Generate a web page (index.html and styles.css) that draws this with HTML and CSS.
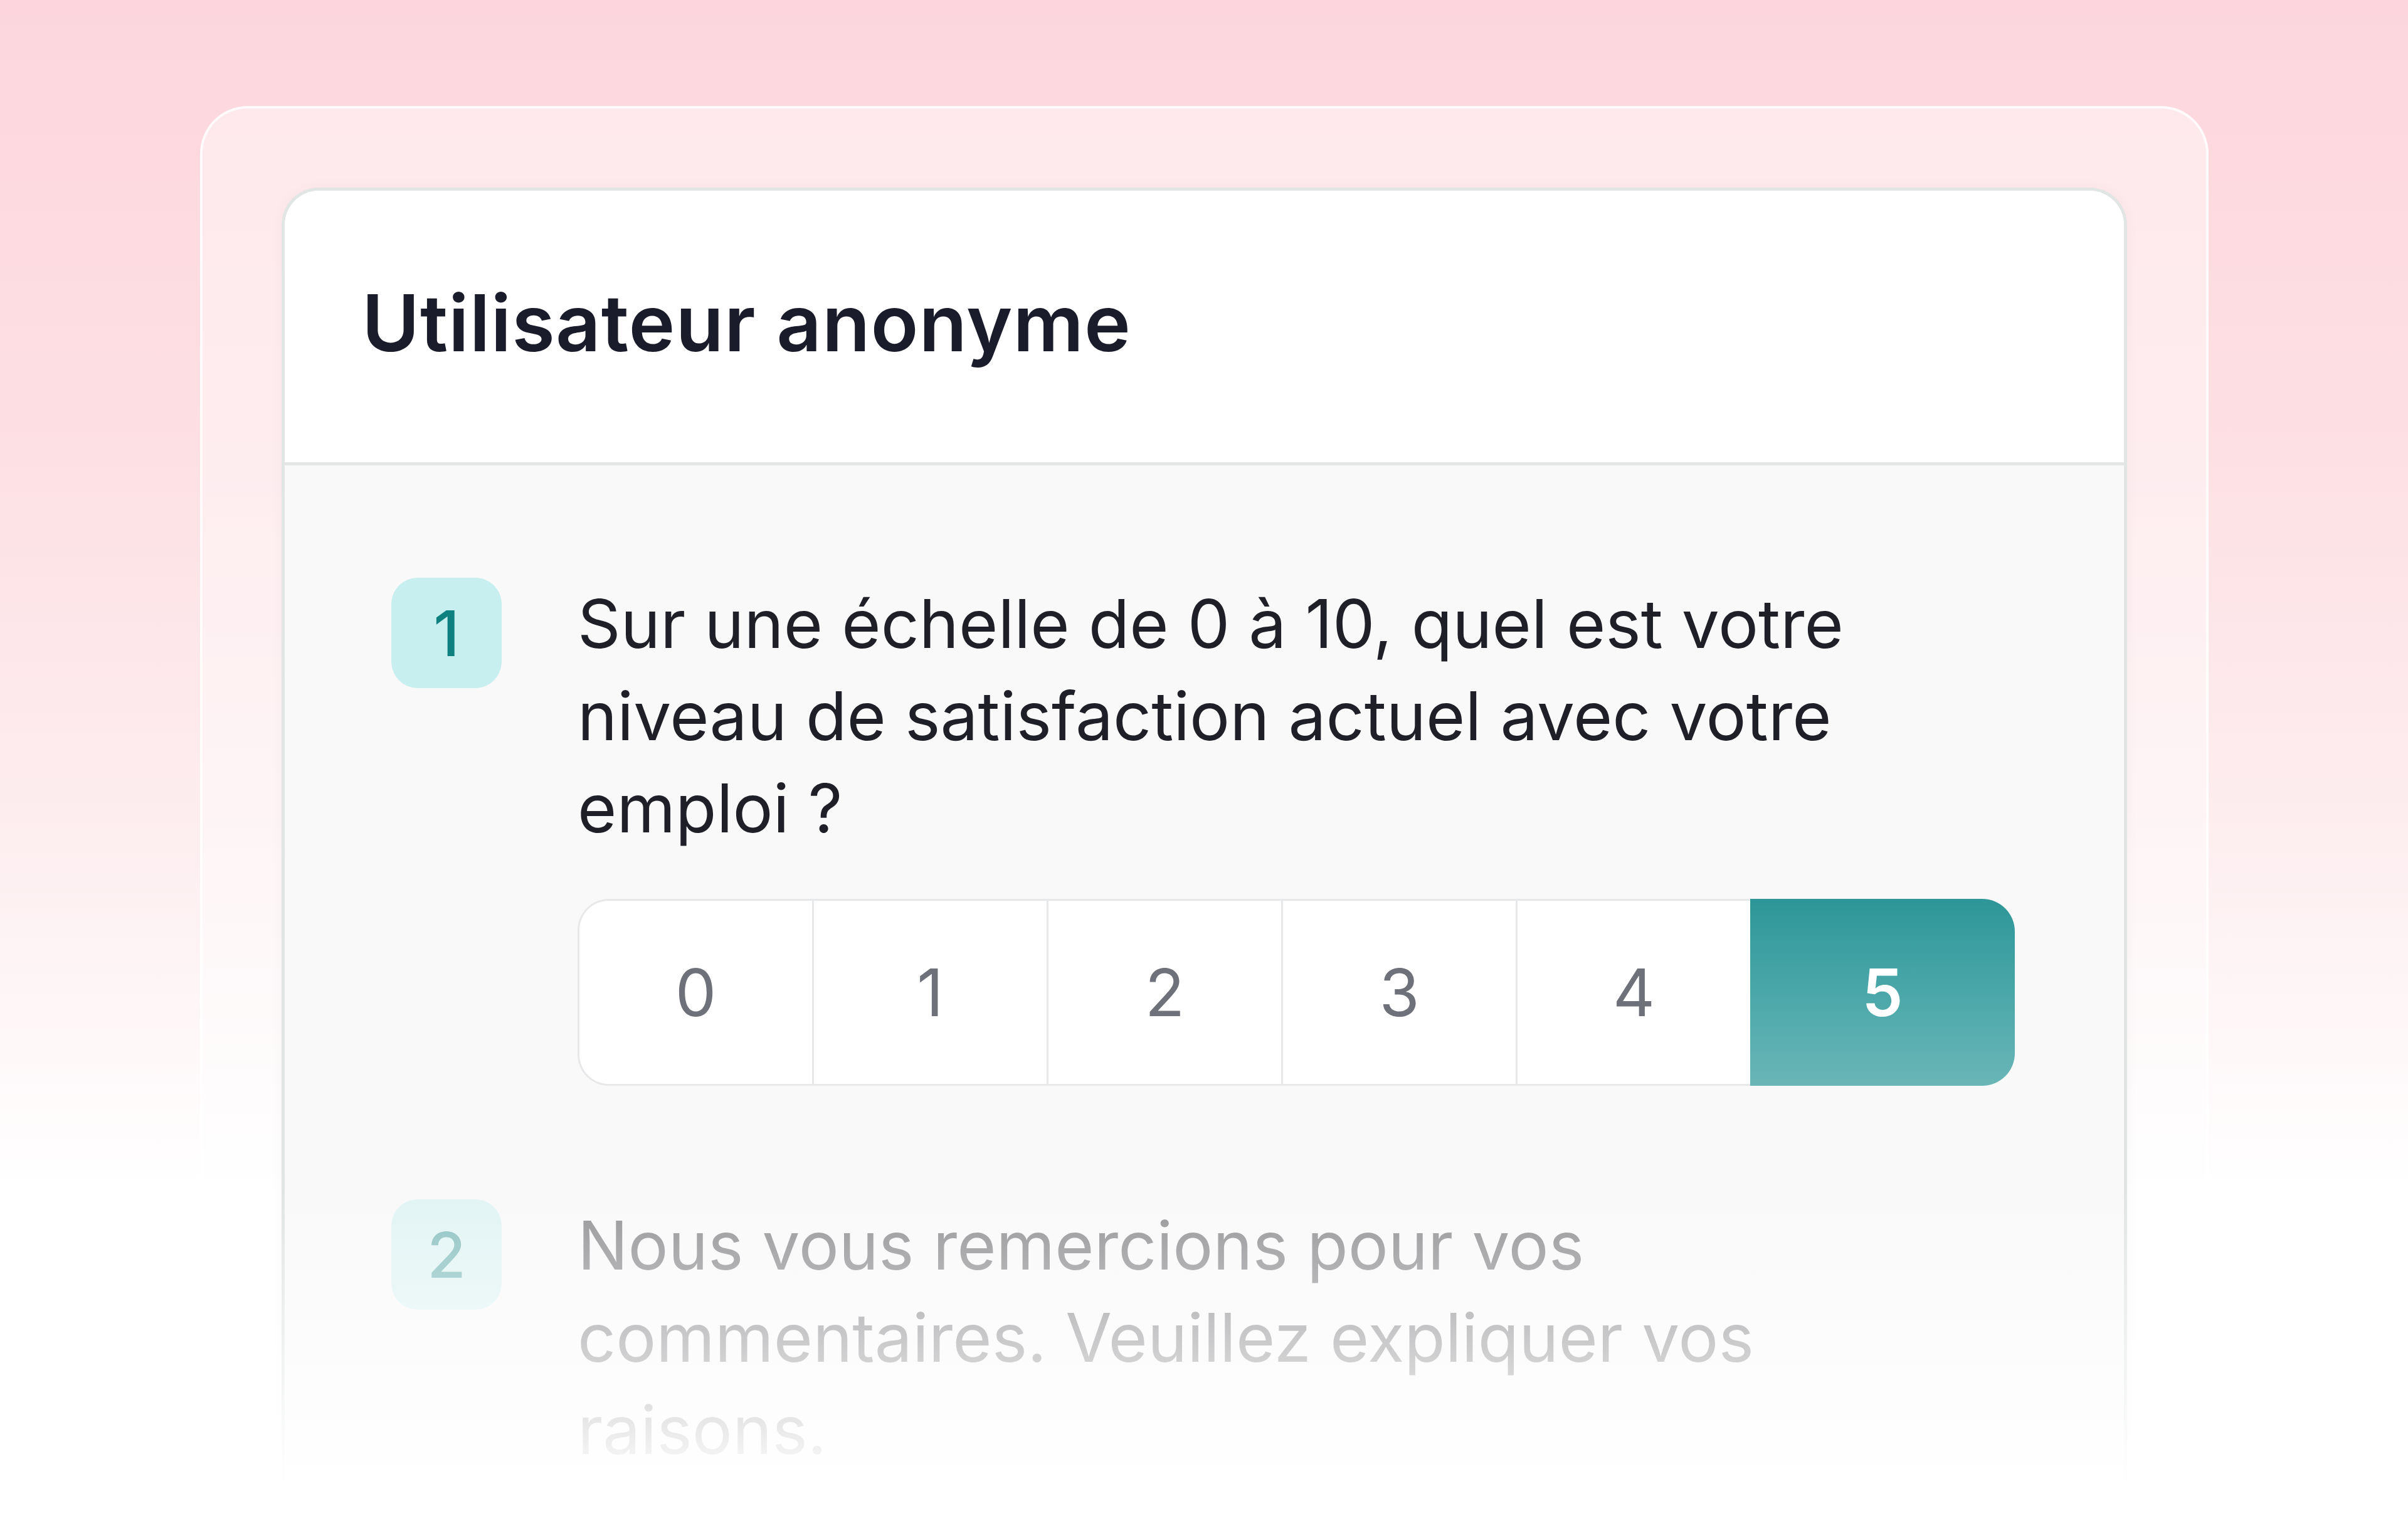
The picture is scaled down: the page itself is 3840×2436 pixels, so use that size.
FILE: index.html
```html
<!DOCTYPE html>
<html lang="fr">
<head>
<meta charset="utf-8">
<title>Utilisateur anonyme</title>
<link rel="stylesheet" href="styles.css">
</head>
<body>
<div class="stage">
  <div class="frame">
    <div class="card">
      <div class="card-header">
        <h1 class="title">Utilisateur anonyme</h1>
      </div>
      <div class="card-body">
        <div class="question">
          <div class="badge">1</div>
          <div class="q-content">
            <p class="q-text">Sur une échelle de 0 à 10, quel est votre niveau de satisfaction actuel avec votre emploi ?</p>
            <div class="scale">
              <div class="cell first">0</div>
              <div class="cell">1</div>
              <div class="cell">2</div>
              <div class="cell">3</div>
              <div class="cell">4</div>
              <div class="cell selected">5</div>
            </div>
          </div>
        </div>
        <div class="question inactive">
          <div class="badge">2</div>
          <div class="q-content">
            <p class="q-text">Nous vous remercions pour vos commentaires. Veuillez expliquer vos raisons.</p>
          </div>
        </div>
      </div>
    </div>
  </div>
</div>
<div class="fade"></div>
</body>
</html>
```

FILE: styles.css
```css
html, body {
  margin: 0;
  padding: 0;
}

body {
  width: 3840px;
  height: 2436px;
  overflow: hidden;
  position: relative;
  font-family: Inter, "Noto Sans", "Liberation Sans", sans-serif;
  background: linear-gradient(180deg, #fdd6dd 0%, #fde0e4 30%, #fdeef0 55%, #ffffff 78%, #ffffff 100%);
}

.stage {
  padding: 169px 318px 0 319px;
}

.frame {
  border: 4px solid rgba(255, 255, 255, 0.75);
  border-bottom: none;
  border-radius: 76px 76px 0 0;
  background: rgba(255, 255, 255, 0.42);
  padding: 126px 126px 0 126px;
  height: 2400px;
}

.card {
  border: 5px solid #e1e5e3;
  border-bottom: none;
  border-radius: 60px 60px 0 0;
  background: #f9f9f9;
  overflow: hidden;
  height: 2300px;
  box-shadow: 0 0 24px rgba(0, 0, 0, 0.03);
}

.card-header {
  box-sizing: border-box;
  background: #ffffff;
  height: 438px;
  display: flex;
  align-items: center;
  padding-left: 123px;
  padding-bottom: 12px;
  border-bottom: 5px solid #e3e5e5;
}

.title {
  margin: 0;
  font-size: 125px;
  font-weight: 600;
  color: #1b1c2b;
  letter-spacing: 1px;
}

.card-body {
  padding: 179px 0 0 170px;
}

.question {
  display: flex;
  align-items: flex-start;
  gap: 121px;
}

.question + .question {
  margin-top: 181px;
}

.badge {
  flex: none;
  width: 176px;
  height: 176px;
  border-radius: 42px;
  background: #c8eff0;
  color: #0f8080;
  font-size: 100px;
  font-weight: 500;
  display: flex;
  align-items: center;
  justify-content: center;
}

.q-content {
  flex: 1;
}

.q-text {
  margin: 0;
  max-width: 2140px;
  font-size: 107px;
  line-height: 147px;
  font-weight: 400;
  color: #1f2027;
}

.scale {
  margin-top: 71px;
  display: flex;
  height: 298px;
}

.cell {
  box-sizing: border-box;
  width: 374px;
  height: 298px;
  background: #ffffff;
  border-top: 3px solid #e7e8ea;
  border-bottom: 3px solid #e7e8ea;
  border-left: 3px solid #e7e8ea;
  display: flex;
  align-items: center;
  justify-content: center;
  font-size: 104px;
  color: #6f717a;
}

.cell.first {
  border-radius: 50px 0 0 50px;
}

.cell.selected {
  width: 422px;
  border: none;
  border-radius: 0 52px 52px 0;
  background: linear-gradient(180deg, #2e9698 0%, #4aa7a9 50%, #6ab6b7 100%);
  color: #ffffff;
  font-weight: 600;
}

.question.inactive {
  opacity: 0.45;
}

.fade {
  position: absolute;
  left: 0;
  right: 0;
  top: 1900px;
  bottom: 0;
  background: linear-gradient(180deg, rgba(255, 255, 255, 0) 0%, rgba(255, 255, 255, 0.5) 45%, #ffffff 88%);
  pointer-events: none;
}
```
